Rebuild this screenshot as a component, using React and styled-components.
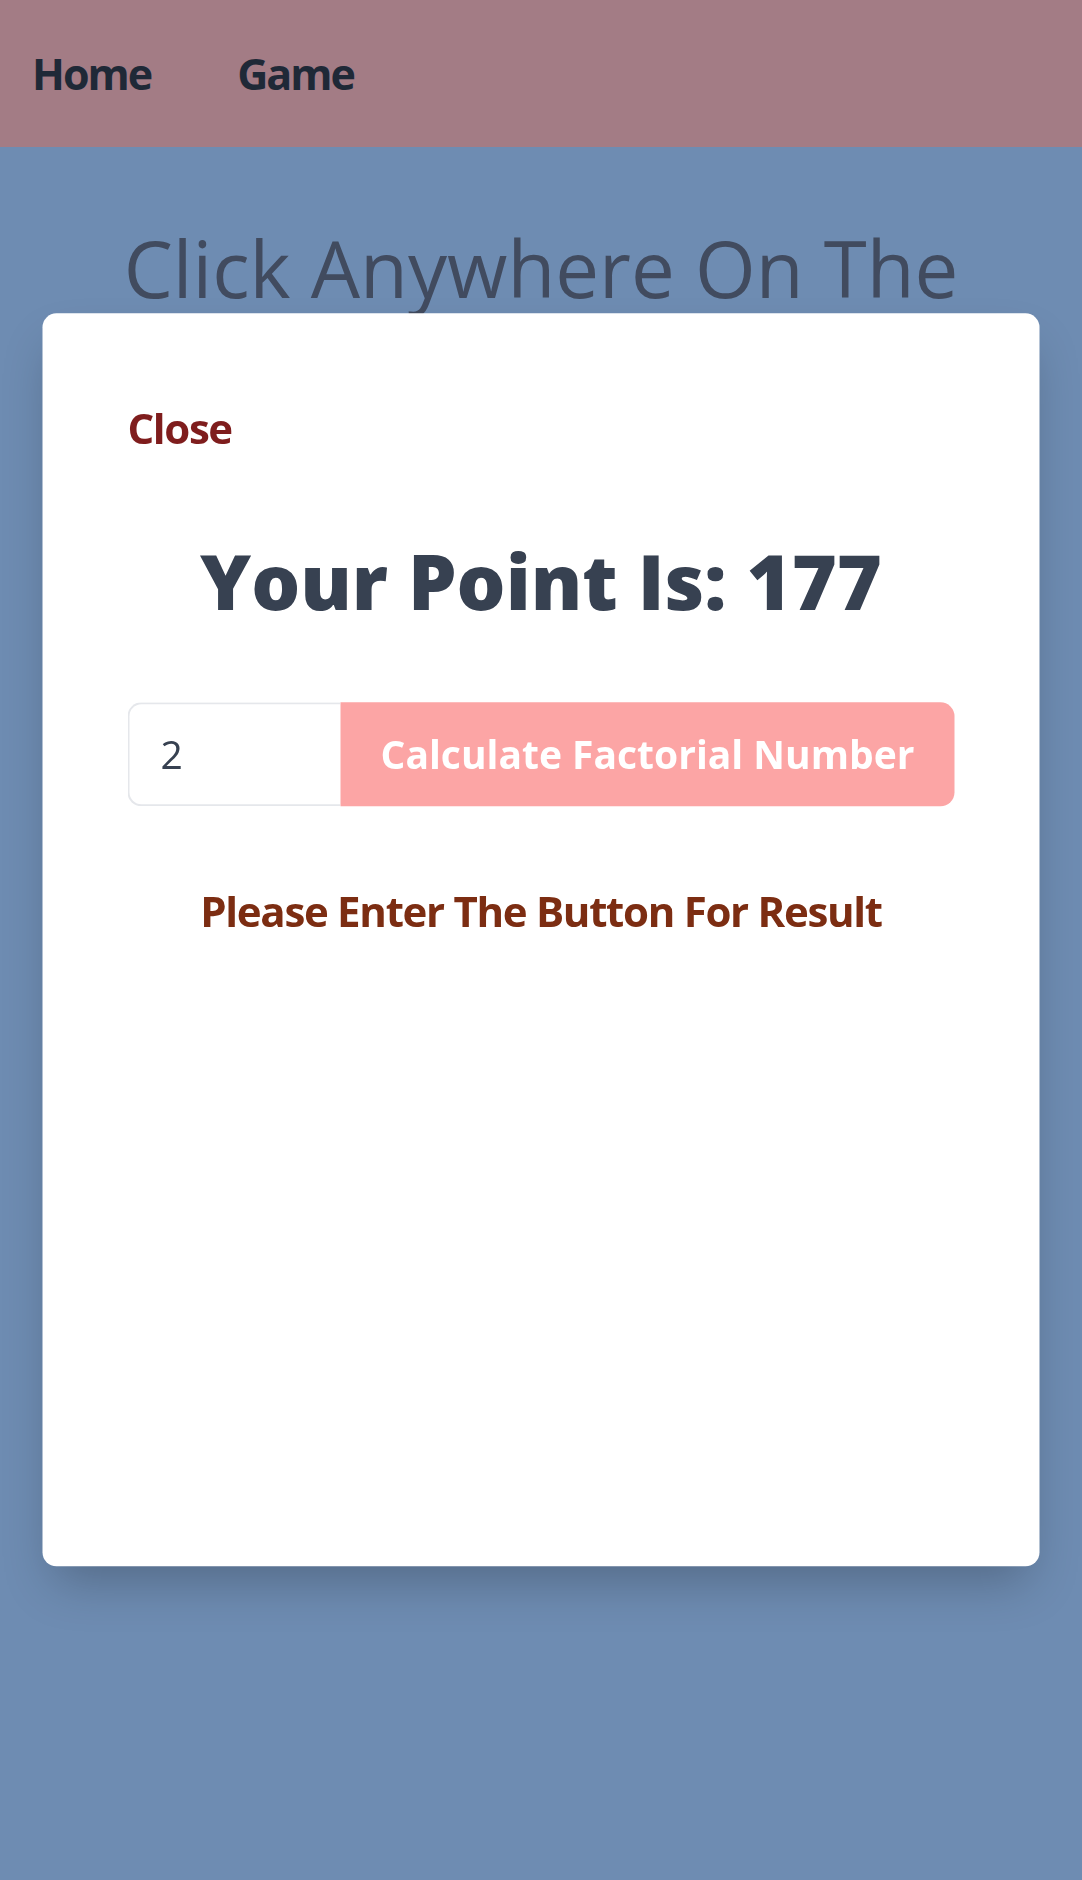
import { useState } from "react";
import styled, { createGlobalStyle } from "styled-components";

const GlobalStyle = createGlobalStyle`
  * {
    box-sizing: border-box;
  }
  body {
    margin: 0;
    font-family: "Open Sans", "Noto Sans", sans-serif;
    background-color: #6e8cb2;
  }
`;

const Page = styled.div`
  min-height: 100vh;
  background-color: #6e8cb2;
`;

const Nav = styled.nav`
  height: 147px;
  background-color: #a37c85;
  display: flex;
  align-items: center;
  gap: 86px;
  padding-left: 32px;
`;

const NavLink = styled.a`
  font-size: 43px;
  line-height: 1.2;
  font-weight: 700;
  letter-spacing: -2px;
  color: #1f2937;
  text-decoration: none;
  cursor: pointer;
`;

const Title = styled.h1`
  margin: 75px 0 0;
  padding: 0 40px;
  text-align: center;
  font-size: 78px;
  line-height: 1.2;
  font-weight: 400;
  color: #414b5f;
`;

const Modal = styled.div`
  position: fixed;
  top: 50%;
  left: 50%;
  transform: translate(-50%, -50%);
  width: 997px;
  height: 66.67%;
  background: #ffffff;
  border-radius: 14px;
  box-shadow: 0 25px 50px -12px rgba(0, 0, 0, 0.25);
  padding: 90px 85px 0;
  display: flex;
  flex-direction: column;
`;

const CloseButton = styled.button`
  align-self: flex-start;
  background: none;
  border: none;
  padding: 0;
  font-family: inherit;
  font-size: 42px;
  line-height: 1.2;
  font-weight: 700;
  letter-spacing: -1.4px;
  color: #7f1d1d;
  cursor: pointer;
`;

const Point = styled.h2`
  margin: 82px 0 0;
  text-align: center;
  font-size: 77px;
  line-height: 1.2;
  font-weight: 800;
  color: #374151;
`;

const Row = styled.div`
  margin-top: 74px;
  display: flex;
  height: 104px;
`;

const NumberInput = styled.input`
  width: 213px;
  height: 100%;
  border: 2px solid #e5e7eb;
  border-right: none;
  border-radius: 14px 0 0 14px;
  padding: 0 0 0 31px;
  font-family: inherit;
  font-size: 39px;
  color: #374151;
  outline: none;
  background: #fff;
`;

const CalcButton = styled.button`
  flex: 1;
  height: 100%;
  border: none;
  border-radius: 0 14px 14px 0;
  background-color: #fca5a5;
  color: #ffffff;
  font-family: inherit;
  font-size: 39px;
  font-weight: 700;
  cursor: pointer;
`;

const Result = styled.p`
  margin: 80px 0 0;
  text-align: center;
  font-size: 42px;
  line-height: 1.2;
  font-weight: 700;
  letter-spacing: -1.3px;
  color: #7c2d12;
`;

const factorial = (n) => {
  let r = 1;
  for (let i = 2; i <= n; i++) r *= i;
  return r;
};

const App = () => {
  const [value, setValue] = useState("2");
  const [result, setResult] = useState(null);
  const [open, setOpen] = useState(true);

  return (
    <>
      <GlobalStyle />
      <Page>
        <Nav>
          <NavLink>Home</NavLink>
          <NavLink>Game</NavLink>
        </Nav>
        <Title>Click Anywhere On The Screen</Title>
        {open && (
          <Modal>
            <CloseButton onClick={() => setOpen(false)}>Close</CloseButton>
            <Point>Your Point Is: 177</Point>
            <Row>
              <NumberInput
                type="text"
                value={value}
                onChange={(e) => setValue(e.target.value)}
              />
              <CalcButton onClick={() => setResult(factorial(Number(value)))}>
                Calculate Factorial Number
              </CalcButton>
            </Row>
            <Result>
              {result === null ? "Please Enter The Button For Result" : result}
            </Result>
          </Modal>
        )}
      </Page>
    </>
  );
};

export default App;
